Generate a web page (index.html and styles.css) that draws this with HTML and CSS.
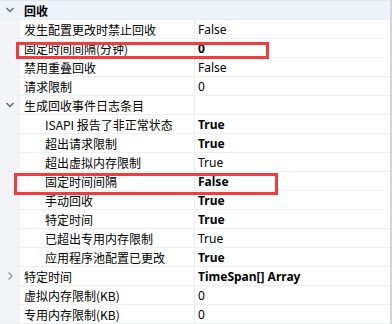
FILE: index.html
```html
<!DOCTYPE html>
<html lang="zh-CN">
  <head>
    <meta charset="UTF-8" />
    <title>回收</title>
    <link rel="stylesheet" href="styles.css">
  </head>
  <body>
    <div class="grid">
      <div class="row group">
        <div class="gutter"><svg width="10" height="8" viewBox="0 0 10 8"><path d="M1.5 2 L5 5.5 L8.5 2" fill="none" stroke="#6b6b6b" stroke-width="1.5"/></svg></div>
        <div class="name">回收</div>
      </div>
      <div class="row">
        <div class="gutter"></div>
        <div class="name">发生配置更改时禁止回收</div>
        <div class="value">False</div>
      </div>
      <div class="row">
        <div class="gutter"></div>
        <div class="name">固定时间间隔(分钟)</div>
        <div class="value bold">0</div>
        <span class="mark mark-a"></span>
      </div>
      <div class="row">
        <div class="gutter"></div>
        <div class="name">禁用重叠回收</div>
        <div class="value">False</div>
      </div>
      <div class="row">
        <div class="gutter"></div>
        <div class="name">请求限制</div>
        <div class="value">0</div>
      </div>
      <div class="row">
        <div class="gutter"><svg width="10" height="8" viewBox="0 0 10 8"><path d="M1.5 2 L5 5.5 L8.5 2" fill="none" stroke="#6b6b6b" stroke-width="1.5"/></svg></div>
        <div class="name">生成回收事件日志条目</div>
        <div class="value"></div>
      </div>
      <div class="row">
        <div class="gutter"></div>
        <div class="name child">ISAPI 报告了非正常状态</div>
        <div class="value bold">True</div>
      </div>
      <div class="row">
        <div class="gutter"></div>
        <div class="name child">超出请求限制</div>
        <div class="value bold">True</div>
      </div>
      <div class="row">
        <div class="gutter"></div>
        <div class="name child">超出虚拟内存限制</div>
        <div class="value">True</div>
      </div>
      <div class="row">
        <div class="gutter"></div>
        <div class="name child">固定时间间隔</div>
        <div class="value bold">False</div>
        <span class="mark mark-b"></span>
      </div>
      <div class="row">
        <div class="gutter"></div>
        <div class="name child">手动回收</div>
        <div class="value bold">True</div>
      </div>
      <div class="row">
        <div class="gutter"></div>
        <div class="name child">特定时间</div>
        <div class="value bold">True</div>
      </div>
      <div class="row">
        <div class="gutter"></div>
        <div class="name child">已超出专用内存限制</div>
        <div class="value">True</div>
      </div>
      <div class="row">
        <div class="gutter"></div>
        <div class="name child">应用程序池配置已更改</div>
        <div class="value bold">True</div>
      </div>
      <div class="row">
        <div class="gutter"><svg width="8" height="10" viewBox="0 0 8 10"><path d="M2.5 1.5 L6 5 L2.5 8.5" fill="none" stroke="#a0a0a0" stroke-width="1.5"/></svg></div>
        <div class="name">特定时间</div>
        <div class="value bold">TimeSpan[] Array</div>
      </div>
      <div class="row">
        <div class="gutter"></div>
        <div class="name">虚拟内存限制(KB)</div>
        <div class="value">0</div>
      </div>
      <div class="row">
        <div class="gutter"></div>
        <div class="name">专用内存限制(KB)</div>
        <div class="value">0</div>
      </div>
    </div>
  </body>
</html>
```

FILE: styles.css
```css
body {
  margin: 0;
  background: #fff;
  font-family: "Noto Sans CJK SC", "Noto Sans", sans-serif;
  font-size: 12px;
  color: #000;
}
.grid {
  width: 390px;
  height: 324px;
  border-right: 2px solid #d6d6d6;
  overflow: hidden;
}
.row {
  position: relative;
  display: flex;
  height: 18px;
  border-bottom: 1px solid #eef0f4;
}
.gutter {
  width: 20px;
  flex: none;
  background: #f2f4f8;
  display: flex;
  align-items: center;
  justify-content: center;
}
.name {
  width: 170px;
  flex: none;
  padding: 2px 0 0 4px;
  line-height: 16px;
  white-space: nowrap;
  border-right: 1px solid #e9ecf0;
}
.name.child {
  padding-left: 25px;
  width: 149px;
}
.value {
  flex: 1;
  padding: 2px 0 0 3px;
  line-height: 16px;
  font-family: "Noto Sans", sans-serif;
  white-space: nowrap;
}
.bold {
  font-weight: bold;
}
.group {
  height: 18px;
  border-top: 1px solid #e4e7eb;
  border-bottom: 1px solid #eef0f4;
  background: #eef3f9;
}
.group .gutter {
  background: #eef3f9;
}
.group .name {
  font-weight: bold;
  border-right: none;
}
.mark {
  position: absolute;
  z-index: 2;
  border: 3px solid #f23b3b;
  box-sizing: border-box;
}
.mark-a {
  left: 16px;
  top: 3px;
  width: 253px;
  height: 17px;
}
.mark-b {
  left: 14px;
  top: 1px;
  width: 264px;
  height: 22px;
}
```
